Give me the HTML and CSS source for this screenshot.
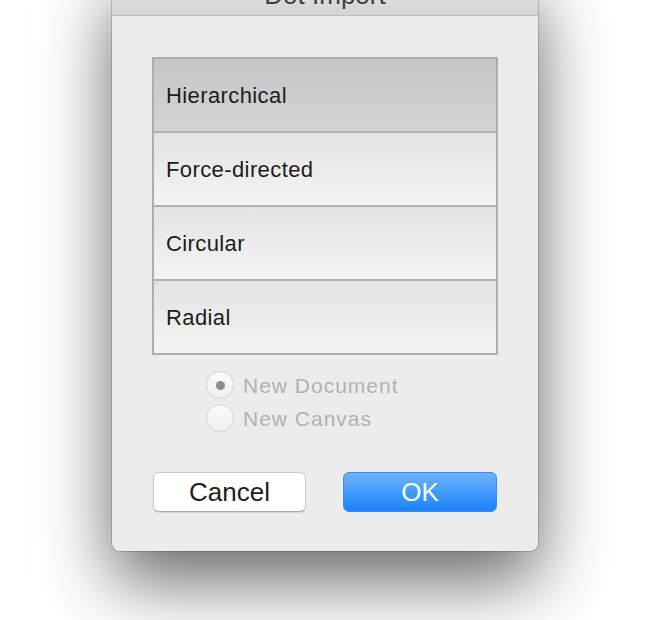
FILE: index.html
```html
<!DOCTYPE html>
<html>
<head>
<meta charset="utf-8">
<link rel="stylesheet" href="styles.css">
</head>
<body>
<div class="window">
  <div class="titlebar">Dot Import</div>
  <div class="content">
    <div class="list">
      <div class="row selected">Hierarchical</div>
      <div class="row">Force-directed</div>
      <div class="row">Circular</div>
      <div class="row">Radial</div>
    </div>
    <div class="radios">
      <div class="radio"><span class="circle checked"></span><span class="rlabel">New Document</span></div>
      <div class="radio"><span class="circle"></span><span class="rlabel">New Canvas</span></div>
    </div>
    <div class="buttons">
      <button class="btn cancel">Cancel</button>
      <button class="btn ok">OK</button>
    </div>
  </div>
</div>
</body>
</html>
```
FILE: styles.css
```css
html, body {
  margin: 0;
  background: #fff;
  height: 620px;
  overflow: hidden;
}
body {
  font-family: "Liberation Sans", Arial, sans-serif;
}
.window {
  margin: -28px 0 0 112px;
  width: 426px;
  border-radius: 8px;
  background: #ececec;
  box-shadow: 0 0 0 1px rgba(0,0,0,0.16), 0 30px 70px rgba(0,0,0,0.6);
  overflow: hidden;
}
.titlebar {
  height: 39px;
  padding-top: 4px;
  line-height: 39px;
  text-align: center;
  font-size: 26px;
  color: #3e3e3e;
  background: linear-gradient(#ebebeb, #d3d3d3);
  border-bottom: 1px solid #bdbdbd;
}
.content {
  padding: 41px 40px 39px;
}
.list {
  border: 2px solid #adadad;
}
.row {
  height: 70px;
  padding: 2px 0 0 12px;
  display: flex;
  align-items: center;
  font-size: 22px;
  letter-spacing: 0.4px;
  color: #1c1c1c;
  background: linear-gradient(#e3e3e3, #f4f4f4);
}
.row + .row {
  border-top: 2px solid #b1b1b1;
}
.row.selected {
  background: linear-gradient(#c5c5c5, #d4d4d4);
}
.radios {
  margin-top: 16px;
  padding-left: 54px;
  display: flex;
  flex-direction: column;
  gap: 5px;
}
.radio {
  display: flex;
  align-items: center;
  gap: 9px;
  height: 28px;
}
.circle {
  width: 26px;
  height: 26px;
  border: 1px solid #d3d3d3;
  border-radius: 50%;
  background: linear-gradient(#fbfbfb, #f0f0f0);
  display: flex;
  align-items: center;
  justify-content: center;
}
.circle.checked::after {
  content: "";
  width: 9px;
  height: 9px;
  border-radius: 50%;
  background: #8d8d8d;
}
.rlabel {
  font-size: 21px;
  letter-spacing: 1px;
  color: #b1b1b1;
  padding-top: 2px;
}
.buttons {
  margin-top: 40px;
  display: flex;
  justify-content: space-between;
  padding: 0 1px;
}
.btn {
  height: 40px;
  font-family: inherit;
  font-size: 26px;
  border-radius: 6px;
  padding: 0;
  box-sizing: border-box;
}
.cancel {
  width: 153px;
  background: #fff;
  border: 1px solid #c9c9c9;
  border-bottom-color: #a9a9a9;
  color: #1e1e1e;
  box-shadow: 0 1px 1px rgba(0,0,0,0.1);
}
.ok {
  width: 154px;
  background: linear-gradient(#6db4fa, #1a81fb);
  border: 1px solid #3a8df6;
  color: #fff;
}
```
